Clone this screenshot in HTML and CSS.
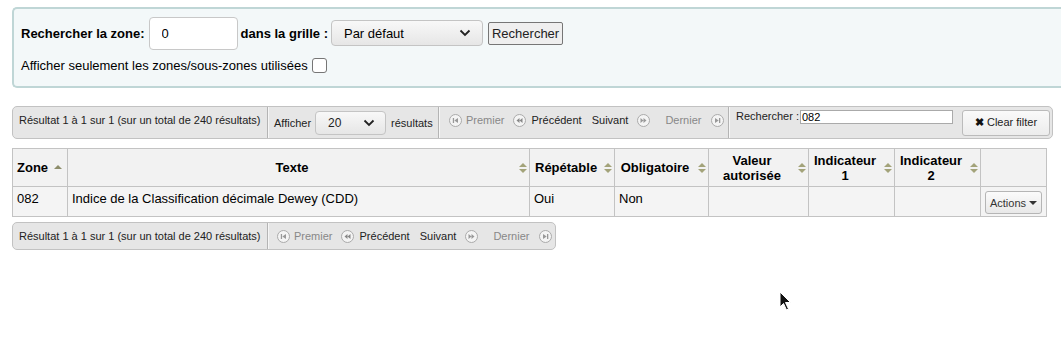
FILE: index.html
```html
<!DOCTYPE html>
<html>
<head>
    <title>Zones MARC</title>
    <link rel="stylesheet" href="styles.css">
</head>
<body>
    <div class="page">
        <form class="zone-search">
            <div class="search-row">
                <label class="strong" for="zone">Rechercher la zone:</label>
                <input type="text" id="zone" class="zone-input" value="0">
                <label class="strong">dans la grille :</label>
                <div class="fake-select grid-select">
                    <span>Par défaut</span>
                    <svg class="chevron" width="12" height="8" viewBox="0 0 12 8"><path d="M1.5 1.5 L6 6 L10.5 1.5" fill="none" stroke="#222" stroke-width="1.8"/></svg>
                </div>
                <button type="button" class="plain-btn">Rechercher</button>
            </div>
            <div class="check-row">
                Afficher seulement les zones/sous-zones utilisées <span class="checkbox"></span>
            </div>
        </form>

        <div class="toolbar">
            <div class="tb-section info">Résultat 1 à 1 sur 1 (sur un total de 240 résultats)</div>
            <div class="tb-section length">
                Afficher
                <div class="fake-select length-select">
                    <span>20</span>
                    <svg class="chevron" width="12" height="8" viewBox="0 0 12 8"><path d="M1.5 1.5 L6 6 L10.5 1.5" fill="none" stroke="#222" stroke-width="1.8"/></svg>
                </div>
                résultats
            </div>
            <div class="tb-section paginate">
                <span class="pg first disabled"><svg class="pg-icon" width="13" height="13" viewBox="0 0 13 13"><circle cx="6.5" cy="6.5" r="6" fill="#f4f4f4" stroke="#aaa"/><rect x="3.8" y="4" width="1.3" height="5" fill="#999"/><path d="M9 4 L5.3 6.5 L9 9 Z" fill="#999"/></svg>Premier</span>
                <span class="pg prev"><svg class="pg-icon" width="13" height="13" viewBox="0 0 13 13"><circle cx="6.5" cy="6.5" r="6" fill="#f4f4f4" stroke="#aaa"/><path d="M6.5 4 L3.5 6.5 L6.5 9 Z M9.5 4 L6.5 6.5 L9.5 9 Z" fill="#888"/></svg>Précédent</span>
                <span class="pg next">Suivant<svg class="pg-icon" width="13" height="13" viewBox="0 0 13 13"><circle cx="6.5" cy="6.5" r="6" fill="#f4f4f4" stroke="#aaa"/><path d="M3.5 4 L6.5 6.5 L3.5 9 Z M6.5 4 L9.5 6.5 L6.5 9 Z" fill="#999"/></svg></span>
                <span class="pg last disabled">Dernier<svg class="pg-icon" width="13" height="13" viewBox="0 0 13 13"><circle cx="6.5" cy="6.5" r="6" fill="#f4f4f4" stroke="#aaa"/><path d="M4 4 L7.7 6.5 L4 9 Z" fill="#999"/><rect x="8" y="4" width="1.3" height="5" fill="#999"/></svg></span>
            </div>
            <div class="tb-section filter">
                Rechercher :<input type="text" class="filter-input" value="082">
            </div>
            <div class="tb-section clear">
                <button type="button" class="clear-btn"><b class="x">✖</b> Clear filter</button>
            </div>
        </div>

        <table class="zones">
            <thead>
                <tr>
                    <th class="c-zone sorted">Zone<span class="sort asc"></span></th>
                    <th class="c-texte">Texte<span class="sort both"></span></th>
                    <th class="c-rep">Répétable<span class="sort both"></span></th>
                    <th class="c-obl">Obligatoire<span class="sort both"></span></th>
                    <th class="c-val">Valeur<br>autorisée<span class="sort both"></span></th>
                    <th class="c-ind1">Indicateur<br>1<span class="sort both"></span></th>
                    <th class="c-ind2">Indicateur<br>2<span class="sort both"></span></th>
                    <th class="c-act nosort"></th>
                </tr>
            </thead>
            <tbody>
                <tr>
                    <td>082</td>
                    <td>Indice de la Classification décimale Dewey (CDD)</td>
                    <td>Oui</td>
                    <td>Non</td>
                    <td></td>
                    <td></td>
                    <td></td>
                    <td class="actions-cell"><button type="button" class="actions-btn">Actions <span class="caret"></span></button></td>
                </tr>
            </tbody>
        </table>

        <div class="toolbar bottom">
            <div class="tb-section info">Résultat 1 à 1 sur 1 (sur un total de 240 résultats)</div>
            <div class="tb-section paginate">
                <span class="pg first disabled"><svg class="pg-icon" width="13" height="13" viewBox="0 0 13 13"><circle cx="6.5" cy="6.5" r="6" fill="#f4f4f4" stroke="#aaa"/><rect x="3.8" y="4" width="1.3" height="5" fill="#999"/><path d="M9 4 L5.3 6.5 L9 9 Z" fill="#999"/></svg>Premier</span>
                <span class="pg prev"><svg class="pg-icon" width="13" height="13" viewBox="0 0 13 13"><circle cx="6.5" cy="6.5" r="6" fill="#f4f4f4" stroke="#aaa"/><path d="M6.5 4 L3.5 6.5 L6.5 9 Z M9.5 4 L6.5 6.5 L9.5 9 Z" fill="#888"/></svg>Précédent</span>
                <span class="pg next">Suivant<svg class="pg-icon" width="13" height="13" viewBox="0 0 13 13"><circle cx="6.5" cy="6.5" r="6" fill="#f4f4f4" stroke="#aaa"/><path d="M3.5 4 L6.5 6.5 L3.5 9 Z M6.5 4 L9.5 6.5 L6.5 9 Z" fill="#999"/></svg></span>
                <span class="pg last disabled">Dernier<svg class="pg-icon" width="13" height="13" viewBox="0 0 13 13"><circle cx="6.5" cy="6.5" r="6" fill="#f4f4f4" stroke="#aaa"/><path d="M4 4 L7.7 6.5 L4 9 Z" fill="#999"/><rect x="8" y="4" width="1.3" height="5" fill="#999"/></svg></span>
            </div>
        </div>

        <svg class="cursor" width="14" height="22" viewBox="0 0 14 22"><path d="M1 1 L1 16 L4.5 12.5 L7.5 19 L9.5 18 L6.5 11.5 L11.5 11.5 Z" fill="#111" stroke="#fff" stroke-width="1"/></svg>
    </div>
</body>
</html>
```

FILE: styles.css
```css
html {
    overflow: hidden;
}

body {
    margin: 0;
    font-family: "Liberation Sans", Arial, sans-serif;
    font-size: 13px;
    color: #000000;
    background-color: #ffffff;
}

.page {
    position: relative;
    padding: 7px 0 0 12px;
    height: 332px;
    overflow: hidden;
}

/* top search box */
.zone-search {
    width: 1100px;
    height: 77px;
    box-sizing: content-box;
    background-color: #f3f8f9;
    border: 2px solid #bfd6d6;
    border-right: none;
    border-radius: 5px 0 0 5px;
    padding: 0 0 0 7px;
    margin: 0;
}

.search-row {
    display: flex;
    align-items: center;
    height: 48px;
}

.strong {
    font-weight: bold;
}

.zone-input {
    width: 89px;
    height: 33px;
    box-sizing: border-box;
    margin: 0 3px 0 4px;
    padding: 0 12px;
    border: 1px solid #c8c8c8;
    border-radius: 4px;
    font-family: inherit;
    font-size: 13px;
    background: #ffffff;
}

.fake-select {
    display: flex;
    align-items: center;
    justify-content: space-between;
    box-sizing: border-box;
    border: 1px solid #c4c4c4;
    border-radius: 4px;
    background: linear-gradient(#f8f8f8, #e6e6e6);
}

.grid-select {
    width: 152px;
    height: 26px;
    margin-left: 3px;
    padding: 0 11px 0 12px;
}

.plain-btn {
    height: 23px;
    margin-left: 5px;
    padding: 0 3px;
    border: 1px solid #767676;
    border-radius: 2px;
    background-color: #efefef;
    font-family: inherit;
    font-size: 13px;
    color: #222;
}

.check-row {
    display: flex;
    align-items: center;
    gap: 4px;
    height: 16px;
}

.checkbox {
    display: inline-block;
    width: 13px;
    height: 13px;
    border: 1px solid #767676;
    border-radius: 3px;
    background: #ffffff;
}

/* datatables toolbar */
.toolbar {
    display: flex;
    align-items: stretch;
    width: 1041px;
    height: 33px;
    box-sizing: border-box;
    margin-top: 18px;
    background-color: #e6e6e6;
    border: 1px solid #c2c2c2;
    border-radius: 5px;
    font-size: 11px;
    color: #222;
}

.toolbar.bottom {
    width: 544px;
    height: 28px;
    margin-top: 5px;
}

.tb-section {
    display: flex;
    align-items: center;
    flex-shrink: 0;
    box-sizing: border-box;
    border-right: 1px solid #b4b4b4;
    box-shadow: 1px 0 0 #f6f6f6;
}

.info {
    width: 255px;
    padding-left: 6px;
    padding-bottom: 5px;
}

.length {
    width: 171px;
    padding-left: 6px;
}

.length-select {
    width: 71px;
    height: 24px;
    margin: 0 5px 0 4px;
    padding: 0 10px 0 12px;
    font-size: 12px;
}

.paginate {
    width: 290px;
    padding-left: 10px;
    padding-bottom: 5px;
}

.toolbar.bottom .info,
.toolbar.bottom .paginate {
    padding-bottom: 0;
}

.toolbar.bottom .paginate {
    flex: 1;
    border-right: none;
    box-shadow: none;
    padding-left: 9px;
}

.pg {
    display: flex;
    align-items: center;
}

.pg.disabled {
    color: #888;
}

.pg.first .pg-icon { margin-right: 4px; }
.pg.first { margin-right: 8px; }
.pg.prev .pg-icon { margin-right: 6px; }
.pg.prev { margin-right: 10px; }
.pg.next .pg-icon { margin-left: 9px; }
.pg.next { margin-right: 15px; }
.pg.last .pg-icon { margin-left: 10px; }

.filter {
    width: 226px;
    padding-left: 7px;
    align-items: flex-start;
    padding-top: 3px;
    border-right: none;
    box-shadow: none;
}

.filter-input {
    width: 153px;
    height: 14px;
    box-sizing: border-box;
    margin: 0 0 0 1px;
    padding: 0 1px;
    border: 1px solid #aaaaaa;
    font-family: inherit;
    font-size: 11px;
    background: #ffffff;
}

.clear {
    border-right: none;
    box-shadow: none;
    padding-left: 7px;
}

.clear-btn {
    width: 88px;
    height: 26px;
    border: 1px solid #bbbbbb;
    border-radius: 3px;
    background: linear-gradient(#fafafa, #ececec);
    font-family: inherit;
    font-size: 11px;
    color: #222;
    padding: 0;
}

.clear-btn .x {
    font-size: 11px;
    color: #111;
}

/* table */
.zones {
    margin-top: 9px;
    border-collapse: collapse;
    width: 1034px;
    table-layout: fixed;
}

.zones th,
.zones td {
    border: 1px solid #c3c3c3;
}

.zones th {
    position: relative;
    height: 38px;
    box-sizing: border-box;
    padding: 0 18px 0 5px;
    background-color: #f2f2f2;
    font-weight: bold;
    text-align: center;
    line-height: 15px;
}

.zones th.nosort {
    padding: 0;
}

.zones td {
    height: 30px;
    box-sizing: border-box;
    vertical-align: top;
    padding: 4px 4px;
    background-color: #f4f4f4;
}

.c-zone { width: 55px; }
.c-texte { width: 462px; }
.c-rep { width: 85px; }
.c-obl { width: 94px; }
.c-val { width: 100px; }
.c-ind1 { width: 86px; }
.c-ind2 { width: 86px; }
.c-act { width: 66px; }

.zones th.sorted {
    padding-right: 5px;
    padding-left: 4px;
    text-align: left;
}

.sort {
    position: absolute;
    right: 6px;
    top: 50%;
    width: 0;
    height: 0;
}

.sort.both::before,
.sort.both::after,
.sort.asc::before {
    content: "";
    position: absolute;
    left: -4px;
    border-left: 4px solid transparent;
    border-right: 4px solid transparent;
}

.sort.both::before {
    top: -5px;
    border-bottom: 4px solid #a3a37a;
}

.sort.both::after {
    top: 1px;
    border-top: 4px solid #a3a37a;
}

.sort.asc {
    right: auto;
    left: 45px;
}

.sort.asc::before {
    top: -3px;
    border-bottom: 4px solid #8d8d6b;
}

.actions-cell {
    text-align: right;
}

.zones td.actions-cell {
    padding: 4px 4px 0 0;
}

.actions-btn {
    height: 23px;
    width: 57px;
    padding: 0;
    border: 1px solid #b5b5b5;
    border-radius: 3px;
    background: linear-gradient(#fbfbfb, #e8e8e8);
    font-family: inherit;
    font-size: 11px;
    color: #333;
}

.caret {
    display: inline-block;
    vertical-align: middle;
    border-left: 4px solid transparent;
    border-right: 4px solid transparent;
    border-top: 4px solid #333;
    margin-top: -2px;
}

.cursor {
    position: absolute;
    left: 779px;
    top: 291px;
}
```
